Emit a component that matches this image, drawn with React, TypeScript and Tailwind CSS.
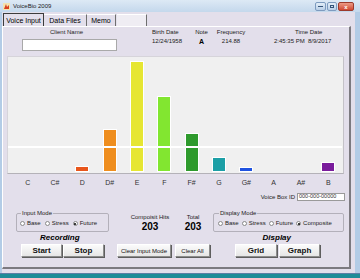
import React from "react";

const bars = [
  { note: "C", h: 0, color: "" },
  { note: "C#", h: 0, color: "" },
  { note: "D", h: 4, color: "bg-[#e8561c]" },
  { note: "D#", h: 41, color: "bg-[#ef8e1e]" },
  { note: "E", h: 109, color: "bg-[#e6e632]" },
  { note: "F", h: 74, color: "bg-[#82e630]" },
  { note: "F#", h: 37, color: "bg-[#2e9a2c]" },
  { note: "G", h: 13, color: "bg-[#1c9fa6]" },
  { note: "G#", h: 3, color: "bg-[#1f52e0]" },
  { note: "A", h: 0, color: "" },
  { note: "A#", h: 0, color: "" },
  { note: "B", h: 8, color: "bg-[#7a1c9c]" },
];

function Radio({ label, checked }: { label: string; checked?: boolean }) {
  return (
    <span className="flex items-center gap-[2px]">
      <span className="w-[5px] h-[5px] rounded-full border border-[#8a8a8a] bg-white flex items-center justify-center">
        {checked && <span className="w-[2px] h-[2px] rounded-full bg-black" />}
      </span>
      <span className="text-[6px] leading-[7px] text-[#222]">{label}</span>
    </span>
  );
}

function Btn({ label, w, ml, big }: { label: string; w: string; ml: string; big?: boolean }) {
  return (
    <div
      className={`${w} ${ml} h-[13px] flex items-center justify-center bg-gradient-to-b from-[#fbfbfb] to-[#e6e6e6] border-t border-l border-t-white border-l-white border-r border-b border-r-[#8c8c8c] border-b-[#8c8c8c] shadow-[1px_1px_0_#5e5e5e] ${
        big ? "text-[8px] font-bold" : "text-[6px]"
      } leading-none text-[#111]`}
    >
      {label}
    </div>
  );
}

export default function App() {
  return (
    <div className="w-[360px] h-[278px] overflow-hidden bg-[#b3cce6] flex flex-col font-[family-name:'Liberation_Sans',Arial,sans-serif] text-black">
      {/* Title bar */}
      <div className="h-[12px] shrink-0 flex items-center bg-gradient-to-b from-[#dde9f5] to-[#c4d8ec] pl-[3px] pr-[6px]">
        <svg width="7" height="7" viewBox="0 0 7 7">
          <rect x="0" y="0" width="7" height="7" fill="#f3e3b0" />
          <path d="M1 6 L3 1 L4 4 L6 2 L6 6 Z" fill="#d8401e" />
        </svg>
        <span className="ml-[3px] text-[6px] leading-none text-[#1a1a1a]">VoiceBio 2009</span>
        <div className="ml-auto flex gap-[1px] self-start mt-[2px]">
          <div className="w-[11px] h-[9px] rounded-[2px] border border-[#7d9bbf] bg-gradient-to-b from-[#e3eef8] to-[#b9cfe7] flex items-center justify-center">
            <span className="w-[5px] h-[1px] bg-[#35557a]" />
          </div>
          <div className="w-[10px] h-[9px] rounded-[2px] border border-[#7d9bbf] bg-gradient-to-b from-[#e3eef8] to-[#b9cfe7] flex items-center justify-center">
            <span className="w-[4px] h-[3px] border border-[#35557a]" />
          </div>
          <div className="w-[16px] h-[9px] rounded-[2px] border border-[#9c3a2c] bg-gradient-to-b from-[#eb9a86] to-[#cf4630] flex items-center justify-center text-white text-[6px] font-bold leading-none">
            x
          </div>
        </div>
      </div>

      {/* Client area */}
      <div className="h-[261px] shrink-0 ml-[2px] mr-[5px] bg-[#e3dfeb] flex flex-col">
        {/* Tabs */}
        <div className="h-[14px] flex items-end pl-[1px]">
          <div className="h-[13px] w-[41px] border border-[#3c3c3c] border-b-0 bg-[#e3dfeb] flex items-center justify-center text-[7px] leading-none">
            Voice Input
          </div>
          <div className="h-[12px] w-[43px] border-r border-[#6f6f6f] border-t border-t-white flex items-center justify-center text-[7px] leading-none">
            Data Files
          </div>
          <div className="h-[12px] w-[29px] border-r border-[#6f6f6f] border-t border-t-white flex items-center justify-center text-[7px] leading-none">
            Memo
          </div>
          <div className="h-[12px] w-[30px] ml-[1px] border-r border-[#6f6f6f] border-t border-t-white bg-[#efedf3]" />
        </div>

        {/* Tab panel */}
        <div className="h-[243px] mr-[4px] border-t border-l border-t-white border-l-white border-r-2 border-b-2 border-r-[#7c7a80] border-b-[#7c7a80] flex flex-col">
          {/* Header */}
          <div className="flex pt-[2px]">
            <div className="ml-[19px] w-[95px] flex flex-col items-center">
              <span className="text-[6px] leading-[7px] pr-[6px] text-[#222]">Client Name</span>
              <div className="mt-[3px] w-[95px] h-[12px] bg-white border border-[#a9a9a9]" />
            </div>
            <div className="ml-[35px] w-[32px] flex flex-col text-[6px] leading-[7px] text-[#222]">
              <span>Birth Date</span>
              <span className="mt-[2px]">12/24/1958</span>
            </div>
            <div className="ml-[11px] w-[13px] flex flex-col items-center text-[6px] leading-[7px] text-[#222]">
              <span>Note</span>
              <span className="mt-[2px] text-[7px] font-bold text-black">A</span>
            </div>
            <div className="ml-[8px] w-[30px] flex flex-col items-center text-[6px] leading-[7px] text-[#222]">
              <span>Frequency</span>
              <span className="mt-[2px]">214.88</span>
            </div>
            <div className="ml-[28px] w-[62px] flex flex-col text-[6px] leading-[7px] text-[#222]">
              <span className="pl-[21px]">Time Date</span>
              <span className="mt-[2px]">2:45:35 PM&nbsp;&nbsp;8/9/2017</span>
            </div>
          </div>

          {/* Chart */}
          <div className="relative mt-[5px] ml-[4px] w-[337px] h-[118px] bg-[#f0f0f0] border border-t-[#d6d4da] border-l-[#d6d4da] border-r-[#c4c2c8] border-b-[#b4b2b8]">
            <div className="ml-[6px] w-[328px] h-full grid grid-cols-12 pb-[2px]">
              {bars.map((b) => (
                <div key={b.note} className="flex items-end justify-center">
                  {b.h > 0 && (
                    <div className={`w-[12px] ${b.color} outline outline-1 outline-white`} style={{ height: b.h }} />
                  )}
                </div>
              ))}
            </div>
            <div className="absolute left-0 right-[1px] top-[89px] h-[2px] bg-white" />
          </div>

          {/* Note labels */}
          <div className="mt-[5px] ml-[11px] w-[328px] grid grid-cols-12 text-[7px] leading-[8px] text-[#333]">
            {bars.map((b) => (
              <span key={b.note} className="text-center">
                {b.note}
              </span>
            ))}
          </div>

          {/* Voice Box ID */}
          <div className="mt-[6px] ml-[4px] w-[338px] flex items-center justify-end gap-[2px]">
            <span className="text-[6px] leading-[7px] text-[#222]">Voice Box ID</span>
            <div className="w-[48px] h-[8px] bg-white border border-[#9a9a9a] flex items-center pl-[1px] text-[5.5px] leading-none text-[#333]">
              000-000-00000
            </div>
          </div>

          {/* Mode row */}
          <div className="mt-[9px] flex items-start">
            <fieldset className="ml-[13px] w-[93px] h-[22px] border border-[#b3b0ba] rounded-[2px] px-[3px] m-0 flex items-center gap-[4px]">
              <legend className="text-[6px] leading-[6px] px-[1px] ml-[1px] text-[#222]">Input Mode</legend>
              <Radio label="Base" />
              <Radio label="Stress" />
              <Radio label="Future" checked />
            </fieldset>
            <div className="ml-[19px] w-[44px] flex flex-col items-center pt-[4px]">
              <span className="text-[6px] leading-[7px] text-[#222]">Compoisit Hits</span>
              <span className="mt-[1px] text-[10px] leading-[10px] font-bold">203</span>
            </div>
            <div className="ml-[11px] w-[20px] flex flex-col items-center pt-[4px]">
              <span className="text-[6px] leading-[7px] text-[#222]">Total</span>
              <span className="mt-[1px] text-[10px] leading-[10px] font-bold">203</span>
            </div>
            <fieldset className="ml-[10px] w-[131px] h-[22px] border border-[#b3b0ba] rounded-[2px] px-[4px] m-0 flex items-center gap-[3px]">
              <legend className="text-[6px] leading-[6px] px-[1px] ml-[1px] text-[#222]">Display Mode</legend>
              <Radio label="Base" />
              <Radio label="Stress" />
              <Radio label="Future" />
              <Radio label="Composite" checked />
            </fieldset>
          </div>

          {/* Section labels */}
          <div className="mt-[1px] flex text-[8px] leading-[9px] font-bold italic">
            <span className="ml-[37px]">Recording</span>
            <span className="ml-[183px]">Display</span>
          </div>

          {/* Buttons */}
          <div className="mt-[2px] flex">
            <Btn label="Start" w="w-[41px]" ml="ml-[18px]" big />
            <Btn label="Stop" w="w-[41px]" ml="ml-[1px]" big />
            <Btn label="Clear Input Mode" w="w-[54px]" ml="ml-[13px]" />
            <Btn label="Clear All" w="w-[35px]" ml="ml-[4px]" />
            <Btn label="Grid" w="w-[42px]" ml="ml-[25px]" big />
            <Btn label="Graph" w="w-[41px]" ml="ml-[2px]" big />
          </div>
        </div>
      </div>

      {/* Bottom frame */}
      <div className="h-[1px] shrink-0 bg-[#5d7fa6]" />
      <div className="flex-1 bg-[#1f8c98]" />
    </div>
  );
}
